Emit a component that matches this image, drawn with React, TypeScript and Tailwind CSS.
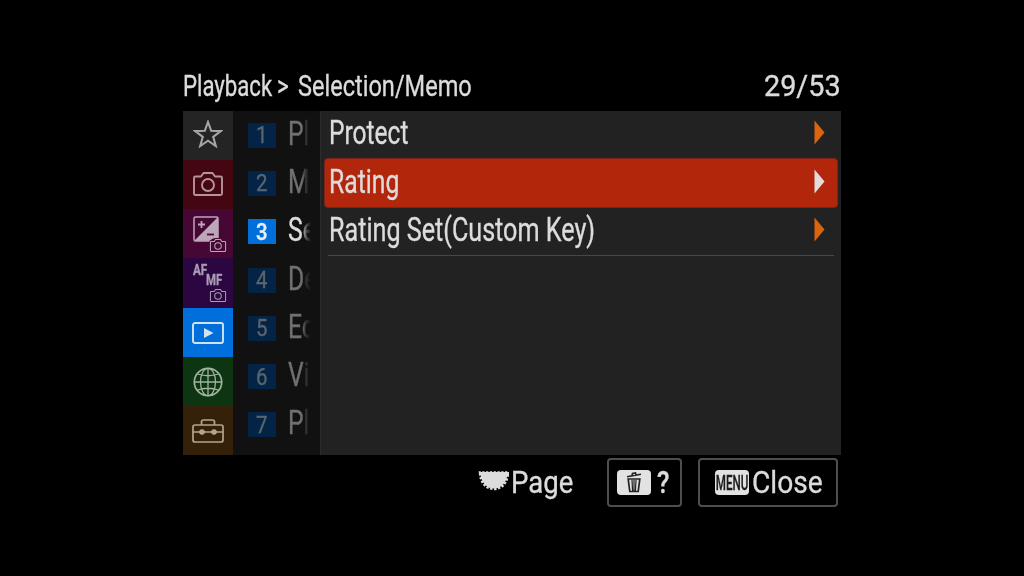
import type { ReactNode } from 'react';
import clsx from 'clsx';

// The camera body uses a condensed face, so labels are squeezed horizontally.
function Label({ className, children }: { className?: string; children: ReactNode }) {
  return <span className={clsx('block shrink-0 origin-left whitespace-nowrap', className)}>{children}</span>;
}

function Camera({ className }: { className?: string }) {
  return (
    <svg className={className} viewBox="0 0 30 24" fill="none" stroke="currentColor" strokeWidth="1.9" strokeLinejoin="round">
      <path d="M2.5 4.5H8L10.5 1H19.5L22 4.5H27.5Q29 4.5 29 6V21.5Q29 23 27.5 23H2.5Q1 23 1 21.5V6Q1 4.5 2.5 4.5Z" />
      <circle cx="15" cy="13" r="6" />
    </svg>
  );
}

function StarIcon() {
  return (
    <svg className="-mt-1 h-7 w-[30px]" viewBox="0 0 30 28" fill="none" stroke="currentColor" strokeWidth="2.1">
      <path d="M15 2L18.2 10.8L27.7 11.1L20.2 16.9L22.8 26L15 20.7L7.2 26L9.8 16.9L2.3 11.1L11.8 10.8Z" />
    </svg>
  );
}

function ExposureIcon() {
  return (
    <div className="relative h-9 w-[34px]">
      <svg className="h-[26px] w-[26px]" viewBox="0 0 26 26" fill="none" stroke="currentColor">
        <rect x="1" y="1" width="24" height="24" rx="1.5" strokeWidth="1.5" />
        <path d="M25 1V25H1Z" fill="currentColor" stroke="none" />
        <path d="M5 8.5H12M8.5 5V12" strokeWidth="1.8" />
        <path d="M14 18.5H21" className="stroke-[#4a0838]" strokeWidth="1.8" />
      </svg>
      <div className="absolute right-0 bottom-0 rounded-tl-lg bg-[#470735] pt-px pl-px">
        <Camera className="h-[13px] w-[18px]" />
      </div>
    </div>
  );
}

function FocusIcon() {
  return (
    <div className="flex h-[38px] w-[33px] flex-col text-[15px] leading-[10px] font-bold">
      <Label className="scale-x-[0.78]">AF</Label>
      <Label className="ml-[13px] scale-x-[0.76]">MF</Label>
      <Camera className="mt-[4px] ml-4 h-[13px] w-[18px] shrink-0" />
    </div>
  );
}

function PlaybackIcon() {
  return (
    <svg className="h-[22px] w-8" viewBox="0 0 32 22" fill="none">
      <rect x="1" y="1" width="30" height="20" rx="2" stroke="currentColor" strokeWidth="1.9" />
      <path d="M12 6L21.5 11L12 16Z" fill="currentColor" />
    </svg>
  );
}

function GlobeIcon() {
  return (
    <svg className="mt-0.5 h-[30px] w-[30px]" viewBox="0 0 30 30" fill="none" stroke="currentColor" strokeWidth="1.3">
      <circle cx="15" cy="15" r="13.7" strokeWidth="1.7" />
      <ellipse cx="15" cy="15" rx="7.5" ry="13.7" />
      <path d="M15 1V29M1 15H29M4.5 7Q15 10.5 25.5 7M4.5 23Q15 19.5 25.5 23" />
    </svg>
  );
}

function ToolboxIcon() {
  return (
    <svg className="mt-0.5 h-6 w-8" viewBox="0 0 32 24" fill="none" stroke="currentColor" strokeWidth="1.7">
      <rect x="1" y="6" width="30" height="17" rx="2" />
      <path d="M9.5 6V3Q9.5 1 11.5 1H20.5Q22.5 1 22.5 3V6M1 13H31" />
      <circle cx="10" cy="13" r="2.8" fill="currentColor" stroke="none" />
      <circle cx="22" cy="13" r="2.8" fill="currentColor" stroke="none" />
    </svg>
  );
}

const tabs = [
  { name: 'my-menu', icon: <StarIcon />, style: 'bg-[#242424] text-[#a5a5a5]' },
  { name: 'shooting', icon: <Camera className="-mt-px h-6 w-[30px]" />, style: 'bg-[#440711] text-[#b5949a]' },
  { name: 'exposure', icon: <ExposureIcon />, style: 'bg-[#470735] pl-1 text-[#bda6b9]' },
  { name: 'focus', icon: <FocusIcon />, style: 'bg-[#2b0640] pt-0.5 pl-0.5 text-[#ab9bb5]' },
  { name: 'playback', icon: <PlaybackIcon />, style: 'bg-[#006edb] pt-px text-[#d5e3f1]' },
  { name: 'network', icon: <GlobeIcon />, style: 'bg-[#0d3511] text-[#9fb4a0]' },
  { name: 'setup', icon: <ToolboxIcon />, style: 'bg-[#35210a] text-[#b3a593]' },
];

const groups = [
  { id: 1, text: 'Pl' },
  { id: 2, text: 'Ma' },
  { id: 3, text: 'Se' },
  { id: 4, text: 'De' },
  { id: 5, text: 'Ed' },
  { id: 6, text: 'Vi' },
  { id: 7, text: 'Pl' },
];

function Arrow({ className }: { className: string }) {
  return (
    <svg className={clsx('h-[25px] w-[11px]', className)} viewBox="0 0 11 25" fill="currentColor">
      <path d="M0.5 0.5L10.5 12.5L0.5 24.5Z" />
    </svg>
  );
}

function DialIcon() {
  return (
    <svg className="-mt-[3px] h-5 w-8 shrink-0" viewBox="0 0 32 20" fill="currentColor">
      <path d="M1 1H31V4H1Z" />
      <path
        d="M2.5 2C3 11.5 8.5 17.5 16 17.5S29 11.5 29.5 2Z"
        stroke="currentColor"
        strokeWidth="3.4"
        strokeDasharray="2.3 1.5"
      />
    </svg>
  );
}

function TrashIcon() {
  return (
    <svg className="h-[21px] w-4" viewBox="0 0 16 21" fill="none" stroke="currentColor">
      <path d="M1 4.8L15 2.2M6 3.5L6.5 1.5L9.5 1L10 2.8" strokeWidth="1.6" />
      <path d="M2.2 7H13.8L12.2 19.5H3.8Z" strokeWidth="1.7" />
      <path d="M6 8L6.6 19M10 8L9.4 19M8 8V19" strokeWidth="1.2" />
    </svg>
  );
}

export default function App() {
  return (
    <div className="h-[576px] w-[1024px] overflow-hidden bg-black pt-[63px] pl-[183px] font-['Roboto','Liberation_Sans',sans-serif] text-[#dcdcdc] [-webkit-text-stroke:0.35px_currentColor]">
      <div className="w-[658px]">
        <header className="flex h-12 pt-[5px] text-[30px] leading-[36px]">
          <Label className="w-[94px] scale-x-[0.74]">Playback</Label>
          <Label className="w-[21px] scale-x-[0.76] text-[29px]">&gt;</Label>
          <Label className="w-[466px] scale-x-[0.785]">Selection/Memo</Label>
          <Label className="scale-x-[0.96]">29/53</Label>
        </header>

        <main className="flex h-[344px] bg-[#111]">
          <nav className="grid w-[50px] grid-rows-7">
            {tabs.map((tab) => (
              <div key={tab.name} className={clsx('flex items-center justify-center', tab.style)}>
                {tab.icon}
              </div>
            ))}
          </nav>

          <ul className="w-[87px]">
            {groups.map((group) => {
              const active = group.id === 3;
              return (
                <li key={group.id} className="flex h-[48.3px] items-center pl-[15px]">
                  <span
                    className={clsx(
                      'flex h-[25px] w-7 items-center justify-center text-[24px] leading-none',
                      active ? 'bg-[#006edb] font-medium text-[#e6edf5]' : 'bg-[#032347] text-[#5b656d]',
                    )}
                  >
                    <span className="scale-x-[0.85]">{group.id}</span>
                  </span>
                  {/* Names fade out under the item panel */}
                  <span className="ml-3 w-6 [mask-image:linear-gradient(to_right,black_14px,rgba(0,0,0,0.35)_18px,transparent_23px)]">
                    <Label className={clsx('-mt-[3px] scale-x-[0.75] text-[33px] leading-[40px]', active ? 'text-[#dcdcdc]' : 'text-[#707070]')}>
                      {group.text}
                    </Label>
                  </span>
                </li>
              );
            })}
          </ul>

          <section className="flex-1 border-l border-[#2c2c2c] bg-[#222] px-[3px] text-[32.5px]">
            <div className="flex h-[47px] items-center justify-between pr-[13px] pl-[5px]">
              <Label className="-mt-0.5 w-20 scale-x-[0.755]">Protect</Label>
              <Arrow className="-mt-1 text-[#da650f]" />
            </div>
            <div className="flex h-[50px] items-center justify-between rounded border border-[#7c2419] bg-[#b2260b] pr-3 pl-1">
              <Label className="-mt-px w-20 scale-x-[0.76]">Rating</Label>
              <Arrow className="-mt-1 text-[#e3dcda]" />
            </div>
            <div className="mr-1 ml-1 flex h-12 items-center justify-between border-b border-[#484848] pr-[9px]">
              <Label className="-mt-0.5 ml-px w-20 scale-x-[0.774]">Rating Set(Custom Key)</Label>
              <Arrow className="-mt-1 text-[#da650f]" />
            </div>
          </section>
        </main>

        <footer className="flex h-[52px] items-start pt-[3px] pl-[295px] text-[32px] leading-[48px]">
          <div className="flex w-[129px] items-center">
            <DialIcon />
            <Label className="ml-px scale-x-[0.86]">Page</Label>
          </div>
          <div className="flex h-[49px] w-[75px] items-center rounded border-2 border-[#4e4e4e] pl-2">
            <span className="flex h-[25px] w-[34px] items-center justify-center rounded-sm bg-[#e2e2e2] text-[#222]">
              <TrashIcon />
            </span>
            <Label className="-mt-px ml-1.5 scale-x-[0.8] font-medium">?</Label>
          </div>
          <div className="ml-4 flex h-[49px] w-[140px] items-center rounded border-2 border-[#4e4e4e] pl-[15px]">
            <span className="flex h-[25px] w-[34px] shrink-0 items-center justify-center rounded-sm bg-[#e2e2e2] text-[20px] text-[#1c1c1c]">
              <span className="scale-x-[0.58] font-medium">MENU</span>
            </span>
            <Label className="-mt-px ml-[3px] scale-x-[0.88]">Close</Label>
          </div>
        </footer>
      </div>
    </div>
  );
}
